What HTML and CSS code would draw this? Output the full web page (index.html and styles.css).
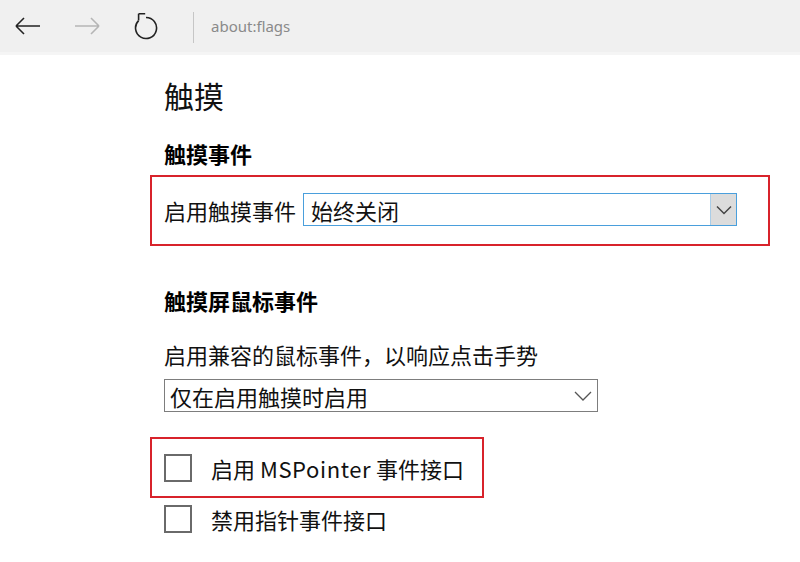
FILE: index.html
```html
<!DOCTYPE html>
<html lang="zh-CN">
<head>
<meta charset="utf-8">
<link rel="stylesheet" href="styles.css">
</head>
<body>
<header class="toolbar">
  <svg class="nav back" width="28" height="24" viewBox="0 0 28 24"><path d="M3 12H27M3 12L11 4M3 12L11 20" fill="none" stroke="#222" stroke-width="1.6"/></svg>
  <svg class="nav fwd" width="28" height="24" viewBox="0 0 28 24"><path d="M1 12H25M25 12L17 4M25 12L17 20" fill="none" stroke="#b5b5b5" stroke-width="1.6"/></svg>
  <svg class="nav refresh" width="24" height="32" viewBox="0 0 24 32"><path d="M12 9.5A10.5 10.5 0 1 1 4.6 12.6" fill="none" stroke="#222" stroke-width="1.6"/><path d="M4.6 5.8H11.2M4.6 5.8V12.6" fill="none" stroke="#222" stroke-width="1.6"/></svg>
  <span class="sep"></span>
  <span class="url">about:flags</span>
</header>
<main class="content">
  <h1 class="title">触摸</h1>
  <h2 class="section">触摸事件</h2>
  <div class="mark mark-wide">
    <div class="row">
      <span class="label">启用触摸事件</span>
      <div class="select select-focus">
        <span class="value">始终关闭</span>
        <span class="btn"><svg width="16" height="10" viewBox="0 0 16 10"><path d="M1 1.5L8 8.5L15 1.5" fill="none" stroke="#444" stroke-width="1.5"/></svg></span>
      </div>
    </div>
  </div>
  <h2 class="section section2">触摸屏鼠标事件</h2>
  <p class="desc">启用兼容的鼠标事件，以响应点击手势</p>
  <div class="select select-plain">
    <span class="value value2">仅在启用触摸时启用</span>
    <span class="chev"><svg width="18" height="10" viewBox="0 0 18 10"><path d="M1 1L9 9L17 1" fill="none" stroke="#555" stroke-width="1.3"/></svg></span>
  </div>
  <div class="mark mark-check">
    <div class="check-row">
      <span class="box"></span>
      <span class="check-label">启用 <span class="latin">MSPointer</span> 事件接口</span>
    </div>
  </div>
  <div class="check-row check2">
    <span class="box"></span>
    <span class="check-label">禁用指针事件接口</span>
  </div>
</main>
</body>
</html>
```
FILE: styles.css
```css
html, body {
  margin: 0;
  padding: 0;
  background: #fff;
}
body {
  font-family: "Noto Sans CJK SC", "Noto Sans", sans-serif;
  color: #111;
}
.toolbar {
  height: 52px;
  background: #f0f0f0;
  border-bottom: 3px solid #f5f5f5;
  display: flex;
  align-items: center;
  padding-left: 13px;
}
.nav { display: block; flex: none; }
.fwd { margin-left: 33px; }
.refresh { margin-left: 32px; margin-top: -4px; }
.sep {
  width: 1px;
  height: 31px;
  background: #c6c6c6;
  margin-left: 35px;
  margin-top: 3px;
}
.url {
  margin-left: 17px;
  font-family: "Noto Sans", "Open Sans", sans-serif;
  font-size: 15px;
  color: #8a8a8a;
  margin-top: -1px;
}
.content {
  padding-left: 164px;
}
.title {
  margin: 20px 0 0;
  font-size: 30px;
  line-height: 40px;
  font-weight: normal;
  color: #111;
}
.section {
  margin: 23px 0 0;
  font-size: 22px;
  line-height: 30px;
  font-weight: bold;
  color: #000;
}
.section2 { margin-top: 39px; }
.mark {
  border: 2px solid #d8232b;
  box-sizing: border-box;
  margin-left: -14px;
  padding-left: 12px;
}
.mark-wide {
  width: 620px;
  margin-top: 7px;
  padding-top: 16px;
  padding-bottom: 18px;
}
.row {
  display: flex;
  align-items: center;
}
.label {
  font-size: 22px;
  line-height: 30px;
  width: 132px;
  white-space: nowrap;
}
.select {
  display: flex;
  align-items: center;
  box-sizing: border-box;
  height: 33px;
  width: 434px;
  background: #fff;
}
.select-focus {
  margin-left: 7px;
  border: 1px solid #4a9fdc;
}
.value {
  flex: 1;
  font-size: 22px;
  line-height: 30px;
  padding-left: 7px;
  white-space: nowrap;
}
.btn {
  width: 25px;
  height: 31px;
  background: #dcdcdc;
  display: flex;
  align-items: center;
  justify-content: center;
  border-left: 1px solid #a9cde8;
}
.btn svg { display: block; }
.desc {
  margin: 24px 0 0;
  font-size: 22px;
  line-height: 30px;
  white-space: nowrap;
}
.select-plain {
  margin-top: 10px;
  border: 1px solid #7d7d7d;
}
.value2 { padding-left: 5px; }
.chev {
  width: 18px;
  margin-right: 5px;
  display: flex;
  align-items: center;
}
.chev svg { display: block; }
.mark-check {
  width: 334px;
  margin-top: 25px;
  padding-top: 15px;
  padding-bottom: 14px;
}
.check-row {
  display: flex;
  align-items: center;
}
.box {
  width: 28px;
  height: 28px;
  box-sizing: border-box;
  border: 2px solid #6a6a6a;
  flex: none;
}
.check-label {
  margin-left: 19px;
  font-size: 22px;
  line-height: 28px;
  white-space: nowrap;
}
.latin { letter-spacing: 0.6px; }
.check2 { margin-top: 7px; }
```
